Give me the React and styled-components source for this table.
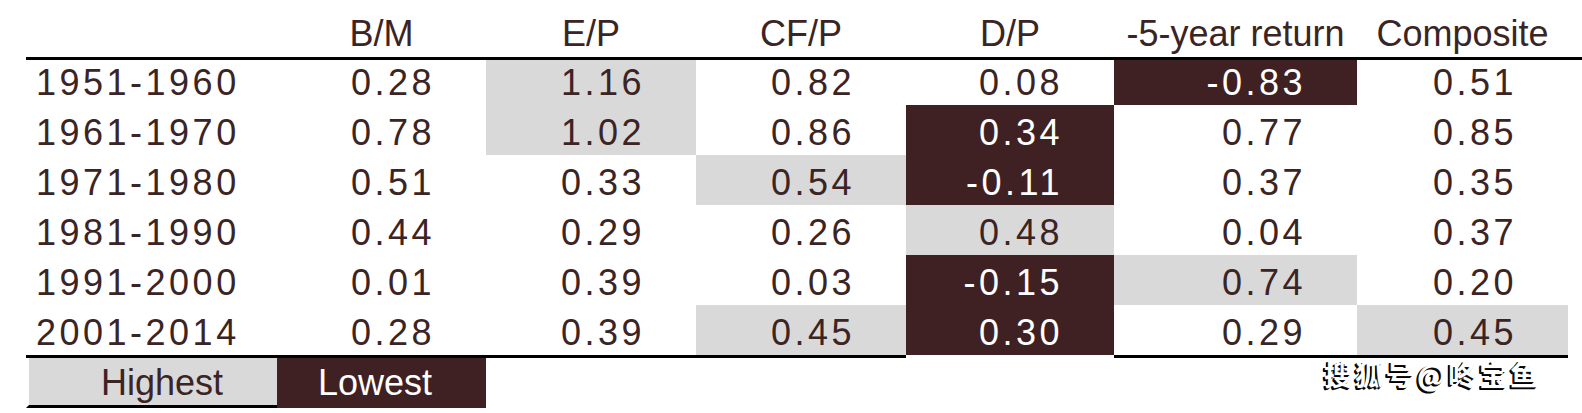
import React from "react";
import styled, { createGlobalStyle } from "styled-components";

const GlobalStyle = createGlobalStyle`
  html, body {
    margin: 0;
    padding: 0;
    background: #fff;
  }
  body {
    font-family: "Liberation Sans", Arial, sans-serif;
    font-size: 36px;
    line-height: 36px;
    color: #3b2424;
  }
  * {
    box-sizing: border-box;
  }
`;

const HIGH = "#d9d9d9";
const LOW = "#3f2123";

const columns = ["B/M", "E/P", "CF/P", "D/P", "-5-year return", "Composite"];

const rows = [
  ["1951-1960", ["0.28"], ["1.16", "h"], ["0.82"], ["0.08"], ["-0.83", "l"], ["0.51"]],
  ["1961-1970", ["0.78"], ["1.02", "h"], ["0.86"], ["0.34", "l"], ["0.77"], ["0.85"]],
  ["1971-1980", ["0.51"], ["0.33"], ["0.54", "h"], ["-0.11", "l"], ["0.37"], ["0.35"]],
  ["1981-1990", ["0.44"], ["0.29"], ["0.26"], ["0.48", "h"], ["0.04"], ["0.37"]],
  ["1991-2000", ["0.01"], ["0.39"], ["0.03"], ["-0.15", "l"], ["0.74", "h"], ["0.20"]],
  ["2001-2014", ["0.28"], ["0.39"], ["0.45", "h"], ["0.30", "l"], ["0.29"], ["0.45", "h"]],
];

const Page = styled.div`
  position: relative;
  width: 1582px;
  height: 413px;
  padding-left: 26px;
  overflow: hidden;
`;

const Row = styled.div`
  display: grid;
  grid-template-columns: 251px 209px 210px 210px 208px 243px 211px;
  height: ${(p) => p.$height}px;
  border-bottom: ${(p) => (p.$rule ? "3px solid #000" : "none")};
`;

const HeadCell = styled.div`
  display: flex;
  align-items: flex-end;
  justify-content: center;
  padding-bottom: 5px;
  white-space: nowrap;
`;

const LabelCell = styled.div`
  display: flex;
  align-items: flex-end;
  padding: 0 0 4px 10px;
  letter-spacing: 3.5px;
  border-bottom: ${(p) => (p.$last ? "3px solid #000" : "none")};
`;

const Cell = styled.div`
  display: flex;
  align-items: flex-end;
  justify-content: flex-end;
  padding: 0 51px 4px 0;
  letter-spacing: 3.5px;
  background: ${(p) => (p.$tone === "h" ? HIGH : p.$tone === "l" ? LOW : "transparent")};
  color: ${(p) => (p.$tone === "l" ? "#fff" : "#3b2424")};
  border-bottom: ${(p) =>
    p.$last ? `3px solid ${p.$tone === "l" ? "#fff" : "#000"}` : "none"};
`;

const LegendCell = styled.div`
  display: flex;
  align-items: flex-end;
  justify-content: flex-end;
  padding: 0 54px 4px 0;
  background: ${(p) => (p.$tone === "h" ? HIGH : LOW)};
  color: ${(p) => (p.$tone === "h" ? "#3b2424" : "#fff")};
  border-left: ${(p) => (p.$tone === "h" ? "3px solid #fff" : "none")};
  border-bottom: 3px solid ${(p) => (p.$tone === "h" ? "#000" : LOW)};
`;

const Watermark = styled.div`
  position: absolute;
  left: 1324px;
  top: 360px;
  font-family: "Noto Sans CJK SC", "Noto Sans", sans-serif;
  font-size: 28px;
  line-height: 28px;
  font-weight: 700;
  letter-spacing: 3px;
  color: #fff;
  text-shadow: -1px 1px 0 #111, -2px 2px 0 #000, -2px 1px 0 #000;
`;

const heights = [45, 50, 50, 50, 50, 53];

const App = () => {
  return (
    <Page>
      <GlobalStyle />
      <Row $height={60} $rule>
        <HeadCell />
        {columns.map((c) => (
          <HeadCell key={c}>{c}</HeadCell>
        ))}
      </Row>
      {rows.map(([label, ...cells], i) => {
        const last = i === rows.length - 1;
        return (
          <Row key={label} $height={heights[i]}>
            <LabelCell $last={last}>{label}</LabelCell>
            {cells.map(([value, tone], j) => (
              <Cell key={j} $tone={tone} $last={last}>
                {value}
              </Cell>
            ))}
          </Row>
        );
      })}
      <Row $height={50}>
        <LegendCell $tone="h">Highest</LegendCell>
        <LegendCell $tone="l">Lowest</LegendCell>
      </Row>
      <Watermark>搜狐号@咚宝鱼</Watermark>
    </Page>
  );
};

export default App;
